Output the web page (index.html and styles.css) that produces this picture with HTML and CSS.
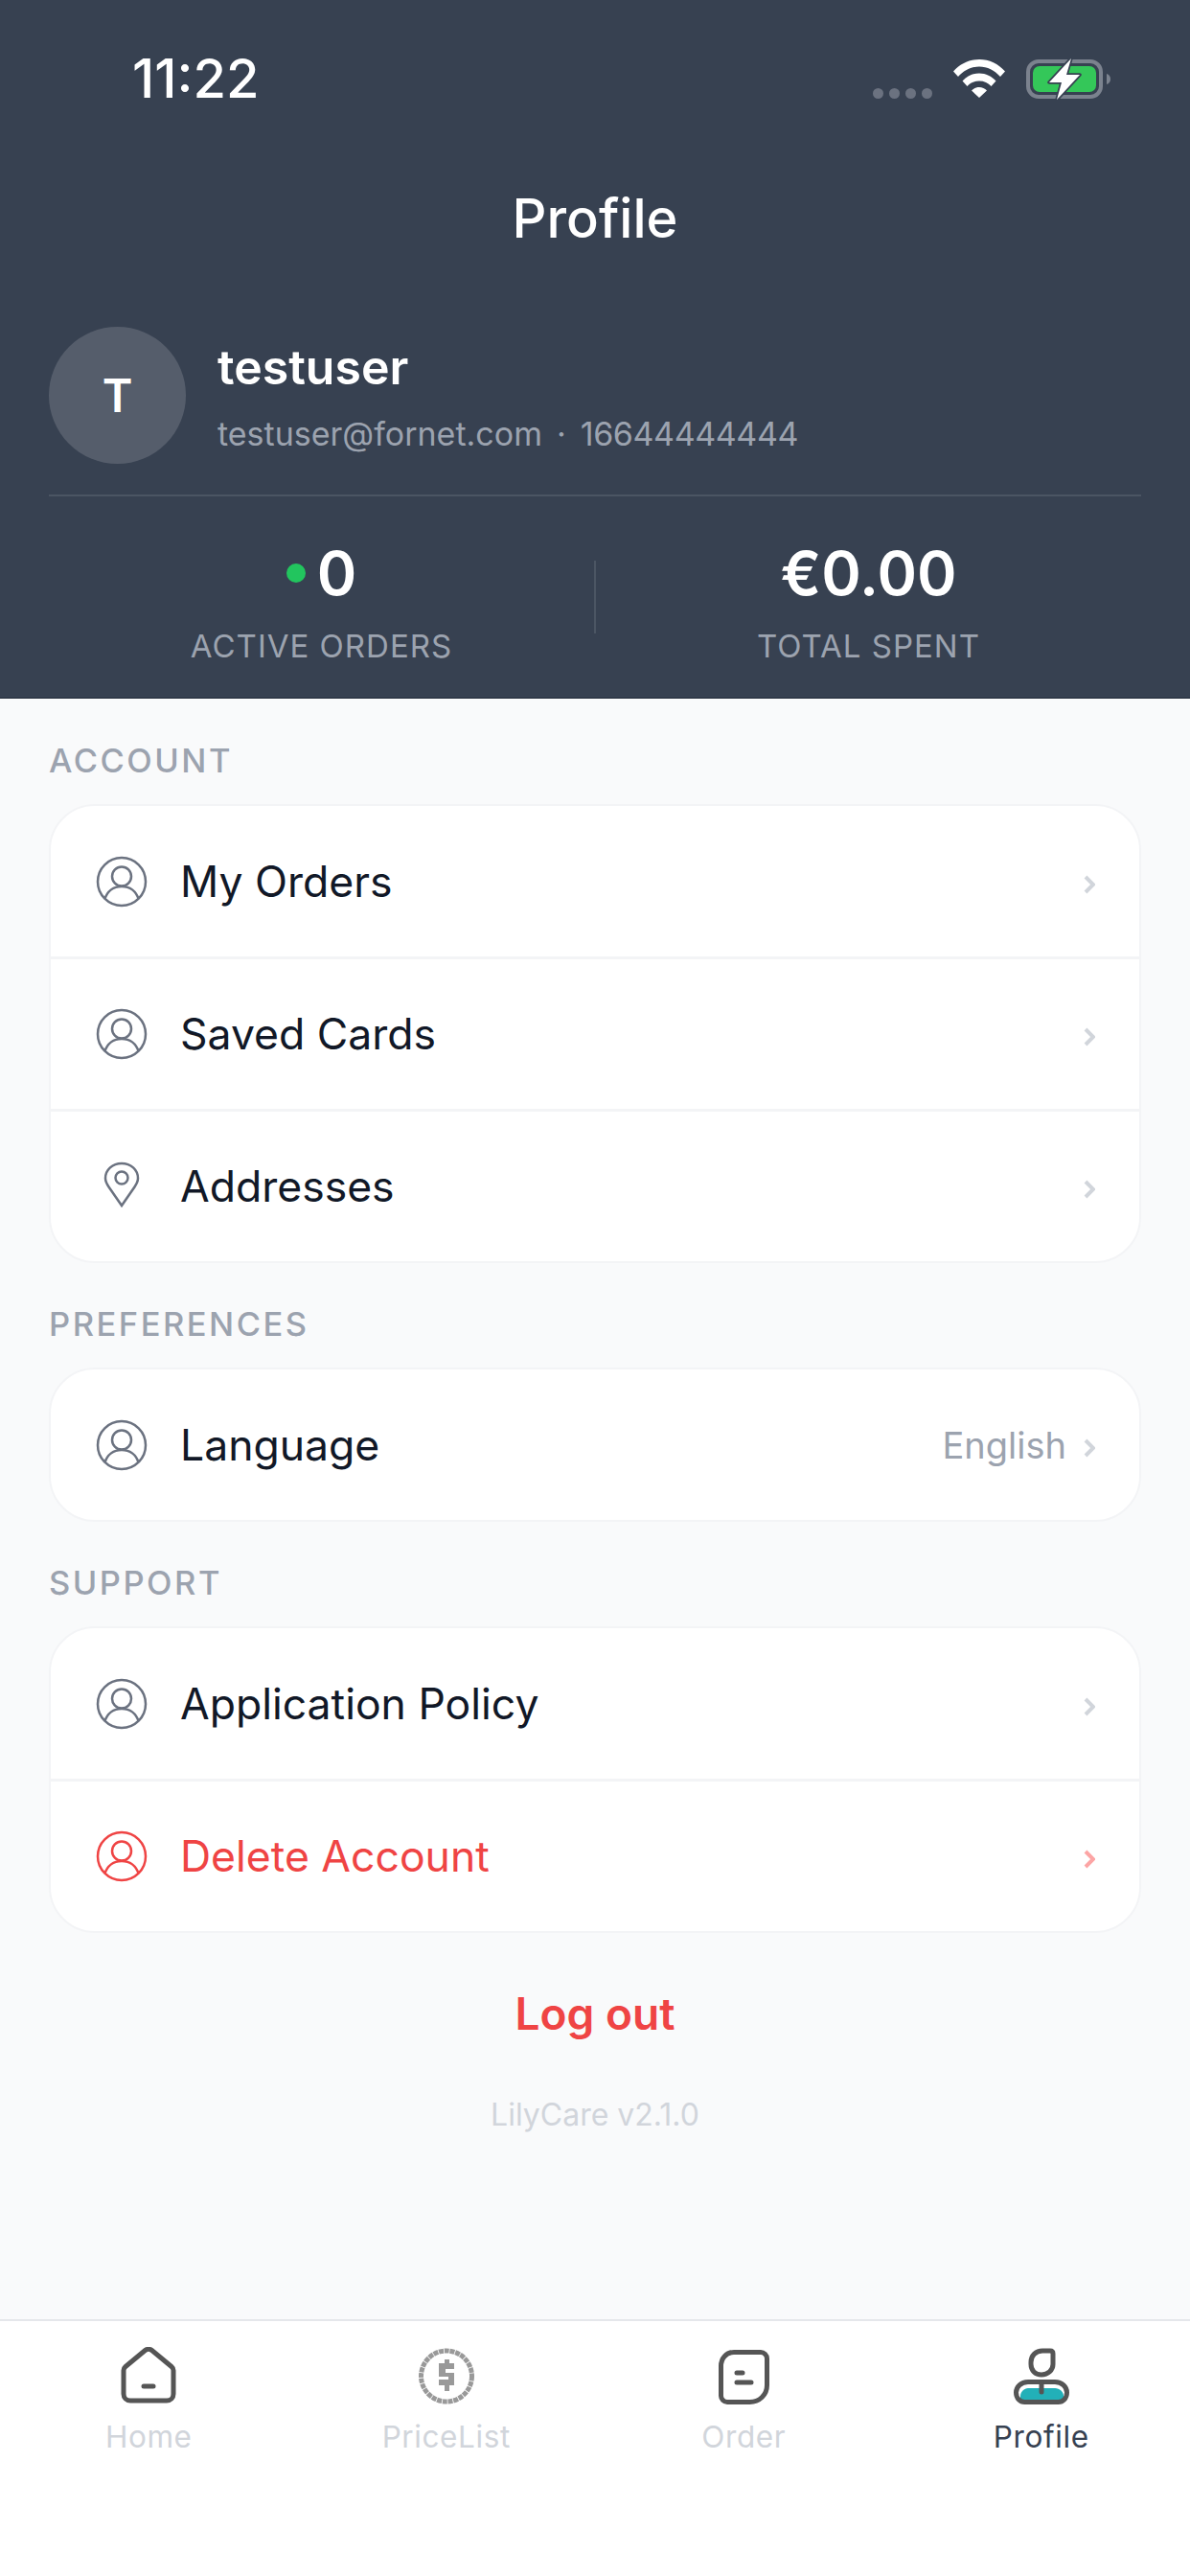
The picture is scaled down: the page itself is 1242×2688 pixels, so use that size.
FILE: index.html
```html
<!DOCTYPE html>
<html lang="en">
<head>
    <meta charset="UTF-8">
    <meta name="viewport" content="width=device-width, initial-scale=1.0">
    <title>Profile</title>
    <link rel="stylesheet" href="styles.css">
</head>
<body>
    <div class="app">
        <header class="header">
            <div class="status">
                <span class="time">11:22</span>
                <div class="status-icons">
                    <div class="signal"><i></i><i></i><i></i><i></i></div>
                    <svg class="wifi" width="54" height="40" viewBox="0 0 54 40">
                        <path fill="#fff" d="M0 12.500C7 4.500 16.500 0 27 0s20 4.500 27 12.500l-5 5.500C43 11.500 35.500 7.500 27 7.500S11 11.500 5 18z"/>
                        <path fill="#fff" d="M9.500 22.500C14 17.500 20 14.500 27 14.500s13 3 17.500 8l-5 5.500C36.500 24.500 32 22.500 27 22.500s-9.500 2-12.500 5.500z"/>
                        <path fill="#fff" d="M19 32.500c2-2.200 5-3.500 8-3.500s6 1.300 8 3.500L27 40z"/>
                    </svg>
                    <svg class="battery" width="88" height="44" viewBox="0 0 88 44">
                        <rect x="2" y="4" width="76" height="37" rx="11" fill="none" stroke="#7b828e" stroke-width="4"/>
                        <rect x="7" y="9" width="66" height="27" rx="7" fill="#34c759"/>
                        <path d="M84 17c2.500 .8 4 2.700 4 5.500s-1.500 4.700-4 5.500z" fill="#7b828e"/>
                        <path d="M47 1L24 26h13l-5 18 24-26H42z" fill="#fff" stroke="#374151" stroke-width="3.500" paint-order="stroke" stroke-linejoin="round"/>
                    </svg>
                </div>
            </div>
            <h1 class="title">Profile</h1>
            <div class="user">
                <div class="avatar">T</div>
                <div class="user-info">
                    <div class="user-name">testuser</div>
                    <div class="user-contact"><span>testuser@fornet.com</span><span class="sep">·</span><span class="phone">16644444444</span></div>
                </div>
            </div>
            <div class="stats">
                <div class="stat">
                    <div class="stat-value"><i class="dot"></i>0</div>
                    <div class="stat-label">ACTIVE ORDERS</div>
                </div>
                <div class="stat-line"></div>
                <div class="stat">
                    <div class="stat-value">€0.00</div>
                    <div class="stat-label">TOTAL SPENT</div>
                </div>
            </div>
        </header>

        <main class="content">
            <div class="section-title">ACCOUNT</div>
            <div class="card">
                <div class="row">
                    <svg class="row-icon" width="54" height="54" viewBox="0 0 54 54"><use href="#i-user"/></svg>
                    <span class="row-text">My Orders</span>
                    <svg class="chev" width="12" height="20" viewBox="0 0 12 20"><path d="M2 2l8 8-8 8"/></svg>
                </div>
                <div class="row">
                    <svg class="row-icon" width="54" height="54" viewBox="0 0 54 54"><use href="#i-user"/></svg>
                    <span class="row-text">Saved Cards</span>
                    <svg class="chev" width="12" height="20" viewBox="0 0 12 20"><path d="M2 2l8 8-8 8"/></svg>
                </div>
                <div class="row">
                    <svg class="row-icon" width="54" height="54" viewBox="0 0 54 54"><path d="M27 47L13.500 27.500C11.500 24.500 10 22 10 18.500 10 9.500 17.500 3 27 3s17 6.500 17 15.500c0 3.500-1.500 6-3.500 9z"/><circle cx="27" cy="18" r="6.500"/></svg>
                    <span class="row-text">Addresses</span>
                    <svg class="chev" width="12" height="20" viewBox="0 0 12 20"><path d="M2 2l8 8-8 8"/></svg>
                </div>
            </div>

            <div class="section-title">PREFERENCES</div>
            <div class="card">
                <div class="row">
                    <svg class="row-icon" width="54" height="54" viewBox="0 0 54 54"><use href="#i-user"/></svg>
                    <span class="row-text">Language</span>
                    <span class="row-value">English</span>
                    <svg class="chev" width="12" height="20" viewBox="0 0 12 20"><path d="M2 2l8 8-8 8"/></svg>
                </div>
            </div>

            <div class="section-title">SUPPORT</div>
            <div class="card">
                <div class="row">
                    <svg class="row-icon" width="54" height="54" viewBox="0 0 54 54"><use href="#i-user"/></svg>
                    <span class="row-text">Application Policy</span>
                    <svg class="chev" width="12" height="20" viewBox="0 0 12 20"><path d="M2 2l8 8-8 8"/></svg>
                </div>
                <div class="row danger">
                    <svg class="row-icon" width="54" height="54" viewBox="0 0 54 54"><use href="#i-user"/></svg>
                    <span class="row-text">Delete Account</span>
                    <svg class="chev" width="12" height="20" viewBox="0 0 12 20"><path d="M2 2l8 8-8 8"/></svg>
                </div>
            </div>

            <div class="logout">Log out</div>
            <div class="version">LilyCare v2.1.0</div>
        </main>

        <nav class="tabs">
            <div class="tab">
                <svg class="tab-icon" width="62" height="62" viewBox="0 0 62 62">
                    <path d="M7 20.500L27.500 3.500c2-1.600 5-1.600 7 0L55 20.500c1.300 1.100 2 2.500 2 4V49c0 4-3 7-7 7H12c-4 0-7-3-7-7V24.500c0-1.500 .7-2.900 2-4z"/>
                    <path d="M26 41h10"/>
                </svg>
                <span>Home</span>
            </div>
            <div class="tab">
                <svg class="tab-icon price" width="62" height="62" viewBox="0 0 62 62">
                    <circle cx="31" cy="30.500" r="26.500" stroke-dasharray="5 .8"/>
                    <path class="price-mark" d="M29 13h5v4h5v6H30v4h9v13h-5v6h-5v-6h-6v-6h10v-3h-10V17h6z"/>
                </svg>
                <span>PriceList</span>
            </div>
            <div class="tab">
                <svg class="tab-icon" width="62" height="62" viewBox="0 0 62 62">
                    <path d="M21 5.500h28c3.500 0 6.500 3 6.500 6.500v28c0 10-8 17.500-18 17.500H14c-3.500 0-6.500-3-6.500-6.500V20C7.500 12 13 5.500 21 5.500z"/>
                    <path d="M24 27h6M24 37h15"/>
                </svg>
                <span>Order</span>
            </div>
            <div class="tab active">
                <svg class="tab-icon" width="62" height="62" viewBox="0 0 62 62">
                    <path class="fill-teal" d="M17 43h28c5 0 9 4 9 8v7H9v-7c0-4 4-8 8-8z"/>
                    <path d="M31 29c-6.500 0-11-4.500-11-11v-2c0-7 5-12 12-12h8c2 0 3 1 3 3v11c0 6.500-5.500 11-12 11z"/>
                    <path d="M17 36.500h28c7.500 0 12.500 5.500 12.500 11 0 6-4 10-9 10h-35c-5 0-9-4-9-10 0-5.500 5-11 12.500-11z"/>
                    <path d="M31 37v10"/>
                </svg>
                <span>Profile</span>
            </div>
        </nav>
    </div>

    <svg class="defs" width="0" height="0">
        <symbol id="i-user" viewBox="0 0 54 54">
            <circle cx="27" cy="27" r="25"/>
            <circle cx="27" cy="21.500" r="10"/>
            <path d="M9.500 45c2.500-8 9-13 17.500-13s15 5 17.500 13"/>
        </symbol>
    </svg>
</body>
</html>
```

FILE: styles.css
```css
* {
    box-sizing: border-box;
}

body {
    margin: 0;
    font-family: Inter, "Noto Sans", sans-serif;
    background-color: white;
}

.app {
    width: 1242px;
    height: 2688px;
    display: flex;
    flex-direction: column;
    background-color: #f9fafb;
}

.defs {
    position: absolute;
}

/* Dark header */
.header {
    height: 729px;
    padding: 0 51px;
    background-color: #374151;
    border-bottom: 1px solid #1f2937;
    color: white;
}

.status {
    height: 164px;
    display: flex;
    align-items: center;
    justify-content: space-between;
    padding: 0 32px 0 87px;
}

.time {
    font-size: 56px;
    font-weight: 500;
}

.status-icons {
    display: flex;
    align-items: center;
    gap: 22px;
}

.signal {
    display: flex;
    gap: 6px;
    margin-top: 30px;
}

.signal i {
    width: 11px;
    height: 11px;
    border-radius: 50%;
    background-color: #6b7280;
}

.title {
    height: 128px;
    margin: 0;
    display: flex;
    align-items: center;
    justify-content: center;
    font-size: 56px;
    font-weight: 500;
}

.user {
    margin-top: 49px;
    display: flex;
    align-items: center;
    gap: 33px;
    padding-bottom: 32px;
    border-bottom: 2px solid #4b5563;
}

.avatar {
    width: 143px;
    height: 143px;
    border-radius: 50%;
    display: flex;
    align-items: center;
    justify-content: center;
    background-color: #555d6b;
    font-size: 48px;
    font-weight: 600;
}

.user-info {
    padding-top: 4px;
}

.user-name {
    font-size: 50px;
    font-weight: 600;
    line-height: 58px;
}

.user-contact {
    margin-top: 19px;
    font-size: 34px;
    line-height: 44px;
    color: #9ca3af;
}

.user-contact .sep {
    margin: 0 15px;
}

.user-contact .phone {
    letter-spacing: -.4px;
}

.stats {
    display: flex;
    align-items: center;
    padding-top: 44px;
}

.stat {
    flex: 1;
    text-align: center;
}

.stat-line {
    width: 2px;
    height: 76px;
    margin-top: -10px;
    background-color: #4b5563;
}

.stat-value {
    display: flex;
    align-items: center;
    justify-content: center;
    gap: 12px;
    font-size: 63px;
    font-weight: 600;
    line-height: 72px;
}

.dot {
    width: 20px;
    height: 20px;
    border-radius: 50%;
    background-color: #22c55e;
}

.stat-label {
    margin-top: 20px;
    font-size: 33px;
    line-height: 40px;
    letter-spacing: 1px;
    color: #9ca3af;
}

/* Menu */
.content {
    flex: 1;
    padding: 0 51px;
}

.section-title {
    height: 44px;
    display: flex;
    align-items: center;
    margin-top: 41px;
    margin-bottom: 24px;
    font-size: 34.500px;
    font-weight: 500;
    letter-spacing: 2.500px;
    color: #9ca3af;
}

.section-title:first-child {
    margin-top: 42px;
}

.card {
    background-color: white;
    border: 2px solid #f3f4f6;
    border-radius: 48px;
    overflow: hidden;
}

.row {
    height: 159px;
    display: flex;
    align-items: center;
    padding: 0 46px 0 47px;
    border-top: 3px solid #f3f4f6;
}

.row:first-child {
    height: 157px;
    border-top: none;
}

.row-icon {
    flex: none;
    fill: none;
    stroke: #6b7280;
    stroke-width: 2.500;
}

.row-text {
    flex: 1;
    margin-left: 34px;
    font-size: 44.500px;
    color: #111827;
}

.row-value {
    margin-right: 18px;
    font-size: 38px;
    color: #9ca3af;
}

.chev {
    margin-top: 6px;
    fill: none;
    stroke: #d1d5db;
    stroke-width: 4;
}

.danger .row-icon {
    stroke: #ef4444;
}

.danger .row-text {
    color: #ef4444;
}

.danger .chev {
    stroke: #fca5a5;
}

.logout {
    margin-top: 54px;
    text-align: center;
    font-size: 46px;
    font-weight: 600;
    line-height: 60px;
    color: #ef4444;
}

.version {
    margin-top: 56px;
    text-align: center;
    font-size: 32px;
    line-height: 40px;
    color: #d1d5db;
}

/* Bottom tabs */
.tabs {
    height: 268px;
    display: flex;
    background-color: white;
    border-top: 2px solid #e5e7eb;
}

.tab {
    flex: 1;
    display: flex;
    flex-direction: column;
    align-items: center;
    padding-top: 27px;
    font-size: 31.500px;
    color: #d1d5db;
}

.tab span {
    margin-top: 10px;
    line-height: 44px;
    letter-spacing: .6px;
}

.tab.active {
    color: #374151;
}

.tab-icon {
    fill: none;
    stroke: #555;
    stroke-width: 5;
    stroke-linecap: round;
    stroke-linejoin: round;
}

.tab-icon.price {
    stroke: #999;
    stroke-linecap: butt;
}

.price-mark {
    fill: #999;
    stroke: none;
}

.fill-teal {
    fill: #22b0b8;
    stroke: none;
}
```
